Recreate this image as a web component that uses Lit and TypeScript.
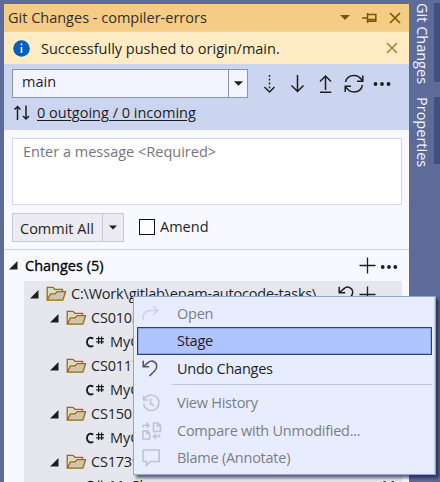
import { LitElement, html, css, svg } from "lit";
import { customElement } from "lit/decorators.js";

const caret = (w = 10, h = 5) => html`<svg width=${w} height=${h} viewBox="0 0 10 5"><path d="M0 0H10L5 5Z" fill="currentColor"/></svg>`;
const close = (w: number) => html`<svg class="ln" width=${w} height=${w} viewBox="0 0 12 12"><path d="M1 1L11 11M11 1L1 11" stroke-width="1.7"/></svg>`;
const plus = html`<svg class="ln plus" width="17" height="17" viewBox="0 0 17 17"><path d="M8.5 0.5V16.500M0.500 8.500H16.500" stroke-width="1.3"/></svg>`;
const dots = html`<svg class="dots" width="18" height="6" viewBox="0 0 18 6"><g fill="currentColor"><circle cx="2.700" cy="3" r="1.900"/><circle cx="9" cy="3" r="1.900"/><circle cx="15.300" cy="3" r="1.900"/></g></svg>`;
const expander = html`<svg class="exp" width="9" height="9" viewBox="0 0 9 9"><path d="M8.500 0V8.500H0Z" fill="#1e1e1e"/></svg>`;
const folder = html`<svg class="folder" width="21" height="16" viewBox="0 0 21 16"><path d="M1.200 14V1.300H7L8.800 3.300H16.500V5.800" fill="#e0d8c8" stroke="#96700f" stroke-width="1.300"/><path d="M1.200 14.200L4.600 7.800H9.200L11 5.700H19.600L16.800 14.200Z" fill="#cfc5b0" stroke="#96700f" stroke-width="1.300" stroke-linejoin="round"/></svg>`;
const undoPath = svg`<path d="M1.200 0.800V6.800H7.200M1.500 6.500L6 2.600C9 0 12.500 1 14 3.500C15.500 6.300 14.600 8.800 12.500 11L7.500 16"/>`;

const icons = {
  open: svg`<path d="M1.300 15C0 10 3 5.500 8 5.500H15.500M11 1L15.700 5.500L11 10"/>`,
  undo: undoPath,
  history: svg`<path d="M1.500 1.500V6H6M1.800 5.800C3.500 2.500 6 1 9.300 1C13.500 1 17 4.500 17 8.800C17 13 13.500 16.500 9.300 16.500C5.200 16.500 2 13.500 1.500 9.500M8.500 4.500V9.500L12 11.700"/>`,
  compare: svg`<path d="M0.900 8.900H5.500L7.700 11V17H0.900ZM5 9V11.500H7.500M11.500 1H16L18.500 3.500V9.500H11.500ZM15.500 1V4H18.500M1.200 5.500V3.300H6.500M4.500 0.800L7 3.300L4.500 5.800M17.500 12V14.500H12M14 12L11.500 14.500L14 17"/>`,
  comment: svg`<path d="M1 1H17.200V12.500H8.700L4.500 16.500V12.500H1Z"/>`,
};

@customElement("context-menu")
class ContextMenu extends LitElement {
  static styles = css`
    :host { display: block; box-sizing: border-box; width: 303px; height: 179px; padding: 3px; background: #e7edff; border: 1px solid #8ea5d6; outline: 0; box-shadow: inset -1px 0 #c6d1ef, 3px 3px 3px rgba(20,25,45,.65); font-size: 14.500px; color: #1e1e1e; }
    .item { display: flex; align-items: center; box-sizing: border-box; height: 28px; border: 1px solid transparent; width: 295px; }
    .item.tall { height: 27px; }
    .icon { width: 39px; height: 20px; display: flex; align-items: center; padding-left: 4px; box-sizing: border-box; color: #56575e; }
    .off { color: #7d7e82; }
    .off .icon { color: #bfc3d2; }
    .first .icon { color: #ced3e3; }
    .sel { background: #b0c4ff; border-color: #26407c; box-shadow: inset 0 0 0 1px #8fa8e4; }
    svg { fill: none; stroke: currentColor; stroke-width: 1.600; overflow: visible; }
    .sep { height: 1px; margin: 1px 0 4px 35px; background: #bbc6e4; width: 260px; }
    .t1 { letter-spacing: -.1px; }
    .t2 { letter-spacing: -.25px; }
  `;
  row(label: string, icon: any, cls: string) {
    return html`<div class="item ${cls}"><span class="icon">${icon ? html`<svg width="18" height="18" viewBox="0 0 18 18">${icon}</svg>` : ""}</span><span class="t2">${label}</span></div>`;
  }
  render() {
    return html`
      ${this.row("Open", icons.open, "off tall first")}
      ${this.row("Stage", null, "sel")}
      ${this.row("Undo Changes", icons.undo, "")}
      <div class="sep"></div>
      ${this.row("View History", icons.history, "off")}
      ${this.row("Compare with Unmodified...", icons.compare, "off tall")}
      ${this.row("Blame (Annotate)", icons.comment, "off")}
    `;
  }
}

@customElement("app-root")
class AppRoot extends LitElement {
  static styles = css`
    :host { display: flex; position: relative; box-sizing: border-box; width: 440px; height: 482px; overflow: hidden; padding: 4px 0 0 4px; background: #5d6b99; color: #1e1e1e; font: 14.500px/20px "Open Sans", "Noto Sans", sans-serif; white-space: nowrap; }
    svg { display: block; flex: none; overflow: visible; }
    .ln { fill: none; stroke: currentColor; }
    .panel { width: 405px; height: 478px; background: #f8f9ff; }
    .title { display: flex; align-items: center; height: 27px; background: #f5cc84; border-bottom: 1px solid #dcd6cd; padding: 0 8px 0 4px; color: #7c5508; }
    .title .name { color: #322f2a; flex: 1; }
    .title svg { margin-left: 12px; }
    .info { display: flex; align-items: center; height: 32px; background: #ffecc4; padding: 0 11px 0 9px; }
    .info .msg { flex: 1; margin-left: 11px; padding-top: 2px; }
    .info .ln { color: #a98540; }
    .branch { height: 61px; background: #ccd5f0; padding: 5px 8px 0; }
    .bar { display: flex; align-items: center; }
    .combo { display: flex; box-sizing: border-box; width: 242px; height: 29px; border: 1px solid #8b93ab; background: #f2f5ff; }
    .combo .v { flex: 1; padding: 2px 0 0 9px; }
    .combo .d { width: 18px; border-left: 1px solid #8b93ab; display: flex; align-items: center; justify-content: center; }
    .tools { display: flex; align-items: center; margin-left: 16px; }
    .sync { display: flex; align-items: center; padding: 5px 0 0 2px; }
    .sync span { margin-left: 7px; text-decoration: underline; text-underline-offset: 2px; }
    .box { box-sizing: border-box; width: 390px; height: 67px; margin: 8px 0 0 8px; padding: 3px 10px; background: #fff; border: 1px solid #d5d8e4; color: #75767b; }
    .commit { display: flex; align-items: center; height: 30px; margin: 7px 0 0 8px; }
    .btn { display: flex; box-sizing: border-box; height: 29px; width: 112px; background: #ebebf1; border: 1px solid #c6c8d8; }
    .btn .l { width: 90px; box-sizing: border-box; padding: 5px 0 0 7px; border-right: 1px solid #c6c8d8; }
    .btn .r { flex: 1; display: flex; align-items: center; justify-content: center; }
    .check { box-sizing: border-box; width: 16px; height: 16px; border: 1.500px solid #111; background: #fff; margin: 0 5px 1px 15px; }
    .head { display: flex; align-items: center; height: 31px; margin-top: 7px; border-top: 1px solid #ccd5ea; padding: 0 11px 0 5px; }
    .head .h { flex: 1; margin-left: 7px; color: #000; -webkit-text-stroke: .3px #000; }
    .head .dots { margin: 2px 0 0 4px; }
    .tree { width: 378px; height: 202px; margin-left: 20px; background: #e6e7ed; overflow: hidden; }
    .row { display: flex; align-items: center; height: 24px; padding-right: 7px; }
    .row.root { padding: 1px 26px 0 6px; }
    .row.dir { padding-left: 26px; }
    .row.file { padding-left: 62px; }
    .row .folder { margin: 0 4px 1px 7px; }
    .grow { flex: 1; }
    .cs { margin-right: 6px; }
    .tabs { display: flex; width: 31px; flex-direction: column; margin-top: -1px; gap: 15px; }
    .tab { box-sizing: border-box; width: 31px; height: 79px; border-right: 6px solid #40507e; color: #f3f5ff; writing-mode: vertical-rl; line-height: 21px; padding-right: 1px; }
    .tab.p { height: 67px; }
    context-menu { position: absolute; left: 133px; top: 296px; }
    .a { letter-spacing: -.2px; }
  `;
  folderRow(name: string, cls = "dir") {
    return html`<div class="row ${cls}">${expander}${folder}<span class="grow a">${name}</span>${cls === "root" ? html`<svg class="ln" width="17" height="17" viewBox="0 0 17 17" stroke-width="1.500">${undoPath}</svg>&nbsp;${plus}` : ""}</div>`;
  }
  fileRow() {
    return html`<div class="row file"><svg class="cs ln" width="18" height="12" viewBox="0 0 18 12" stroke="#27852d"><path d="M7.300 2.500C3.500 0.500 1 2.500 1 6C1 9.600 3.700 11.500 7.300 9.800" stroke-width="1.900"/><path d="M12.600 0.500V8M15.600 0.500V8M10.200 2.700H18M10.200 5.900H18" stroke-width="1.200"/></svg><span class="grow">MyClass.cs</span><span>M</span></div>`;
  }
  render() {
    return html`
      <div class="panel">
        <div class="title"><span class="name">Git Changes - compiler-errors</span>${caret()}<svg class="ln" width="15" height="10" viewBox="0 0 15 10"><path d="M0 5H5M5.500 0V10M5.500 1.500H13.800V8.300H5.500M5.500 6.500H14" stroke-width="1.500"/></svg>${close(12)}</div>
        <div class="info"><svg width="17" height="17" viewBox="0 0 17 17"><circle cx="8.500" cy="8.500" r="8.300" fill="#0560bd"/><path d="M8.500 3.500V5.200M8.500 7V13" stroke="#fff" stroke-width="1.600"/></svg><span class="msg">Successfully pushed to origin/main.</span>${close(12)}</div>
        <div class="branch">
          <div class="bar">
            <div class="combo"><span class="v">main</span><span class="d">${caret(9, 5)}</span></div>
            <div class="tools">
              <svg class="ln" width="119" height="20" viewBox="0 0 119 20" stroke-width="1.500">
                <path d="M5.500 1V16" stroke-dasharray="1.800 2"/><path d="M0.500 13L5.500 18L10.500 13"/>
                <path d="M33.500 1V17.500M27.500 11.500L33.500 17.500L39.500 11.500"/>
                <path d="M61.500 16V2M56 7.500L61.500 2L67 7.500M56 18.300H67.200"/>
                <path d="M81.500 8C82.500 4 86 1.500 90 1.500C94 1.500 96.500 3.500 98.500 7M98.800 1.500V7.200H93M98.500 11C97.500 15.500 94 18 90 18C86 18 83.500 16 81.500 12.500M81.200 18V12.300H87"/>
              </svg>
            </div>
            <svg class="dots" width="18" height="6" viewBox="0 0 18 6"><g fill="currentColor" transform="translate(-10 0)"><circle cx="2.500" cy="3" r="1.900"/><circle cx="9" cy="3" r="1.900"/><circle cx="15.500" cy="3" r="1.900"/></g></svg>
          </div>
          <div class="sync"><svg class="ln" width="16" height="16" viewBox="0 0 16 16" stroke-width="1.500"><path d="M3.500 15V1.500M0.500 4.500L3.500 1.500L6.500 4.500M12 0.500V14M9 11L12 14L15 11"/></svg><span>0 outgoing / 0 incoming</span></div>
        </div>
        <div class="box">Enter a message &lt;Required&gt;</div>
        <div class="commit"><div class="btn"><span class="l">Commit All</span><span class="r">${caret(8, 5)}</span></div><span class="check"></span><span>Amend</span></div>
        <div class="head">${expander}<span class="h">Changes (5)</span>${plus}${dots}</div>
        <div class="tree">
          ${this.folderRow("C:\\Work\\gitlab\\epam-autocode-tasks\\", "root")}
          ${["CS0103", "CS0117", "CS1501", "CS1739"].map((n) => html`${this.folderRow(n)}${this.fileRow()}`)}
        </div>
      </div>
      <div class="tabs"><div class="tab">Git Changes</div><div class="tab p">Properties</div></div>
      <context-menu></context-menu>
    `;
  }
}
